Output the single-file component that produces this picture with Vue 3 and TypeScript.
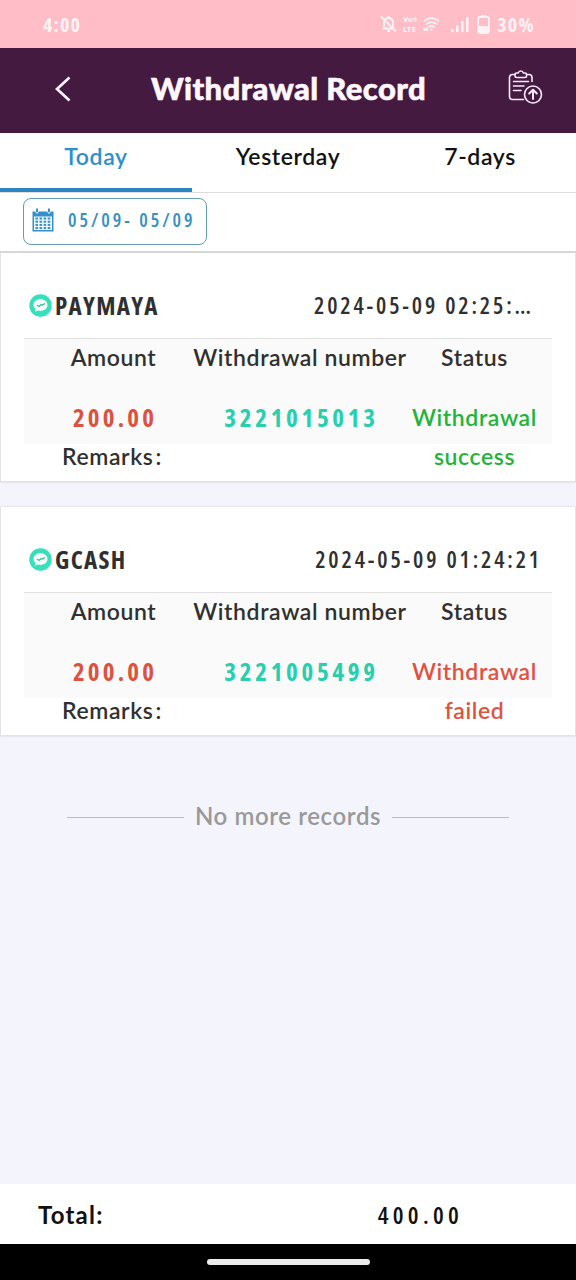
<script setup lang="ts">
interface WithdrawalRecord {
  method: string
  time: string
  amount: string
  serial: string
  status: string[]
  ok: boolean
}

const tabs: string[] = ['Today', 'Yesterday', '7-days']
const activeTab = 'Today'
const records: WithdrawalRecord[] = [
  { method: 'PAYMAYA', time: '2024-05-09 02:25:', amount: '200.00', serial: '3221015013', status: ['Withdrawal', 'success'], ok: true },
  { method: 'GCASH', time: '2024-05-09 01:24:21', amount: '200.00', serial: '3221005499', status: ['Withdrawal', 'failed'], ok: false },
]
const calendarRows = [0, 1, 2, 3]
const calendarCols = [0, 1, 2, 3]
</script>

<template>
  <div class="screen">
    <div class="statusbar">
      <span class="clock">4:00</span>
      <div class="indicators">
        <svg class="bell" width="17" height="18" viewBox="0 0 17 18" fill="none" stroke="currentColor" stroke-width="1.8">
          <path d="M4 13V8c0-3 1.600-5 4.500-5S13 5 13 8v5M2.500 13.500h12M7 16h3M8.500 1v2M1 1.500l15 15" />
        </svg>
        <span class="volte"><span>Vo9</span><span>LTE</span></span>
        <svg class="wifi" width="17" height="16" viewBox="0 0 17 16" fill="none" stroke="currentColor" stroke-width="1.8">
          <path d="M1 5.500c4-4.500 11-4.500 15 0M3.200 8.500c3-3.300 7.600-3.300 10.600 0M5.500 11.300c1.800-1.900 4.200-1.900 6 0M1.500 12v3M4 11.500V15" />
          <circle cx="8.500" cy="13.500" r="1.200" fill="currentColor" stroke="none" />
        </svg>
        <svg class="signal" width="18" height="17" viewBox="0 0 18 17" fill="currentColor">
          <rect x="0" y="13" width="2.500" height="3" />
          <rect x="5" y="9.500" width="2.500" height="6.500" />
          <rect x="10" y="5" width="2.500" height="11" />
          <rect x="15" y="1" width="2.500" height="15" />
        </svg>
        <svg class="battery" width="13" height="20" viewBox="0 0 13 20">
          <path d="M4 1h5v2H4z" fill="currentColor" />
          <rect x="1.200" y="3" width="10.600" height="16" rx="1.800" fill="none" stroke="currentColor" stroke-width="1.800" />
          <path d="M2 12h9v6H2z" fill="currentColor" />
        </svg>
        <span class="percent">30%</span>
      </div>
    </div>

    <header class="titlebar">
      <svg class="back" width="18" height="28" viewBox="0 0 18 28" fill="none" stroke="#fff3ff" stroke-width="2.700">
        <path d="M15.500 2.500 3 14l12.500 11.500" />
      </svg>
      <h1>Withdrawal Record</h1>
      <svg class="report" width="36" height="36" viewBox="0 0 36 36" fill="none" stroke="#fbe9fb" stroke-width="1.600" stroke-linecap="round" stroke-linejoin="round">
        <path d="M8 5.500H5.500c-2 0-3 1-3 3v19c0 2 1 3 3 3h11M19.500 5.500H22c2 0 3 1 3 3V12.500" />
        <path d="M8 7V5.500C8 4.500 8.700 4 9.700 4h1.500C11.700 2.500 12.500 2 13.800 2s2.100.5 2.600 2h1.500c1 0 1.700.5 1.700 1.500V7c0 1-.7 1.500-1.700 1.500H9.700C8.700 8.500 8 8 8 7z" />
        <path d="M6.500 12.500h15M6.500 17h10.500M6.500 21.500h7.500" />
        <circle cx="26" cy="25.500" r="8.500" />
        <path d="M26 30v-9M22.200 24.500l3.800-3.800 3.800 3.800" stroke-width="2" />
      </svg>
    </header>

    <nav class="tabs">
      <div v-for="tab in tabs" :key="tab" class="tab" :class="{ active: tab === activeTab }"><span>{{ tab }}</span></div>
    </nav>

    <div class="filter">
      <button class="range">
        <svg width="22" height="24" viewBox="0 0 22 24">
          <path d="M.5 3.500H3L5 6l2-2.500h8L17 6l2-2.500h2.500v20H.5z" fill="#3390cd" />
          <path d="M4 .5h2v3.800H4zM16 .5h2v3.800h-2z" fill="#3390cd" />
          <path d="M2 8.500h18v13.500H2z" fill="#f4fbff" />
          <template v-for="r in calendarRows" :key="r">
            <rect v-for="c in calendarCols" :key="c" :x="3.400 + c * 4.100" :y="9.500 + r * 3.200" width="2.600" height="2" fill="#3390cd" />
          </template>
        </svg>
        <span>05/09- 05/09</span>
      </button>
    </div>

    <main>
      <article v-for="record in records" :key="record.serial" class="card">
        <div class="card-head">
          <svg class="badge" width="23" height="23" viewBox="0 0 23 23">
            <circle cx="11.500" cy="11.500" r="11.200" fill="#39dfba" />
            <path d="M11.500 5.300c4 0 7 2.500 7 5.800s-3 5.800-7 5.800c-1 0-1.800-.1-2.600-.4L5.800 17.800l.6-3c-1.200-1-1.900-2.200-1.900-3.700 0-3.300 3-5.800 7-5.800z" fill="#f2fffc" />
            <path d="M7.800 11.300l2.400 1 1.800-1.600 1.300.4 2.700-1.700" fill="none" stroke="#34b99b" stroke-width="1.200" />
          </svg>
          <span class="method">{{ record.method }}</span>
          <time :class="{ clipped: record.ok }">{{ record.time }}<span v-if="record.ok" class="dots">...</span></time>
        </div>
        <div class="details">
          <div class="col amount"><span class="label">Amount</span><span class="value">{{ record.amount }}</span></div>
          <div class="col serial"><span class="label">Withdrawal number</span><span class="value">{{ record.serial }}</span></div>
          <div class="col status" :class="record.ok ? 'success' : 'failed'">
            <span class="label">Status</span>
            <span class="value"><span v-for="line in record.status" :key="line">{{ line }}</span></span>
          </div>
        </div>
        <div class="remarks">Remarks<span>:</span></div>
      </article>
      <div class="end"><i></i><span>No more records</span><i></i></div>
    </main>

    <footer>
      <span class="total">Total:</span>
      <span class="sum">400.00</span>
    </footer>
    <div class="gesture"><i></i></div>
  </div>
</template>

<style>
body { margin: 0; background: #f4f4fc; }
</style>

<style scoped>
* { box-sizing: border-box; }
.screen { width: 576px; height: 1280px; display: flex; flex-direction: column; overflow: hidden; background: #f4f4fc; color: #303030; font-family: Lato, "Noto Sans", sans-serif; font-weight: 600; letter-spacing: .6px; white-space: nowrap; }
.statusbar, .range, .method, time, .amount .value, .serial .value, .sum { font-family: "Open Sans", "Noto Sans", sans-serif; font-stretch: 75%; }
.statusbar { flex: 0 0 48px; padding: 0 41px 0 43px; display: flex; justify-content: space-between; align-items: center; background: #ffbdc7; color: #fff3f5; font-size: 20px; font-weight: 700; letter-spacing: 1.200px; }
.indicators { display: flex; align-items: center; }
.volte { display: flex; flex-direction: column; gap: 1px; margin-left: 6px; width: 16px; font-family: Roboto, sans-serif; font-stretch: 100%; font-size: 7.500px; line-height: 9px; font-weight: 900; letter-spacing: .2px; }
.wifi { margin-left: 4px; }
.signal { margin-left: 11px; }
.battery { margin-left: 8px; }
.percent { margin-left: 7px; }
.titlebar { flex: 0 0 85px; display: flex; align-items: center; padding: 0 33px 0 54px; background: #441a40; }
.back { margin-top: -3px; }
.titlebar h1 { flex: 1; margin: -5px 0 0; padding-left: 79px; font-size: 31px; font-weight: 900; letter-spacing: .4px; color: #fff7ff; -webkit-text-stroke: .6px #fff7ff; line-height: 40px; }
.report { margin-top: -7px; }
.tabs { flex: 0 0 59px; display: grid; grid-template-columns: repeat(3, 192px); background: #fff; border-bottom: 1px solid #dedede; }
.tab { height: 59px; padding-top: 7px; text-align: center; font-size: 23px; line-height: 32px; color: #111; }
.tab.active { color: #2d8fce; border-bottom: 4px solid #2c86c1; }
.filter { flex: 0 0 60px; padding: 5px 23px; background: #fff; border-bottom: 2px solid #d9d9d9; }
.range { width: 184px; height: 47px; display: flex; align-items: center; gap: 14px; padding: 0 8px 3px; border: 1px solid #629fae; border-radius: 8px; background: #fff; color: #388fc2; font-size: 19px; font-weight: 600; letter-spacing: 3px; }
.card { height: 229px; margin-bottom: 25px; padding: 0 23px; background: #fff; border: solid #e2e2e7; border-width: 0 1px 1px; box-shadow: 0 0 2px #ccc; }
.card-head { height: 86px; padding: 19px 12px 0 5px; display: flex; align-items: center; border-bottom: 1px solid #e0e0e0; }
.method { margin-left: 3px; font-size: 25px; font-weight: 700; letter-spacing: 1.300px; }
time { margin-left: auto; font-size: 23px; letter-spacing: 2.850px; margin-right: -2px; }
time.clipped { margin-right: 9px; }
.dots { letter-spacing: 0; }
.details { height: 105px; display: grid; grid-template-columns: 179px 194px 1fr; background: #fafafa; }
.col { display: flex; flex-direction: column; align-items: center; font-size: 23px; }
.label { height: 60px; line-height: 37px; }
.value { line-height: 39px; margin-top: -1px; }
.amount .value, .serial .value { font-size: 25px; font-weight: 700; letter-spacing: 3.200px; margin-right: -3px; }
.amount .value { color: #dc513f; }
.serial .value { color: #26cfad; letter-spacing: 3.700px; }
.status .value { display: flex; flex-direction: column; align-items: center; }
.success .value { color: #23b437; }
.failed .value { color: #e05240; }
.remarks { padding-left: 38px; line-height: 25px; font-size: 23px; }
.remarks span { margin-left: 2px; }
.end { display: flex; align-items: center; justify-content: center; gap: 11px; margin-top: 61px; height: 40px; font-size: 24px; color: #999; }
.end span { margin-top: -3px; }
.end i { width: 117px; height: 1px; background: #bbb; }
footer { flex: 0 0 60px; margin-top: auto; display: flex; align-items: center; background: #fff; color: #111; font-size: 24px; padding: 0 113px 0 38px; justify-content: space-between; }
.total { font-weight: 700; letter-spacing: 1.200px; }
.sum { font-size: 24px; letter-spacing: 4.300px; }
.gesture { flex: 0 0 36px; display: flex; justify-content: center; align-items: center; background: #000; }
.gesture i { width: 163px; height: 6px; border-radius: 3px; background: #ececec; }
</style>
